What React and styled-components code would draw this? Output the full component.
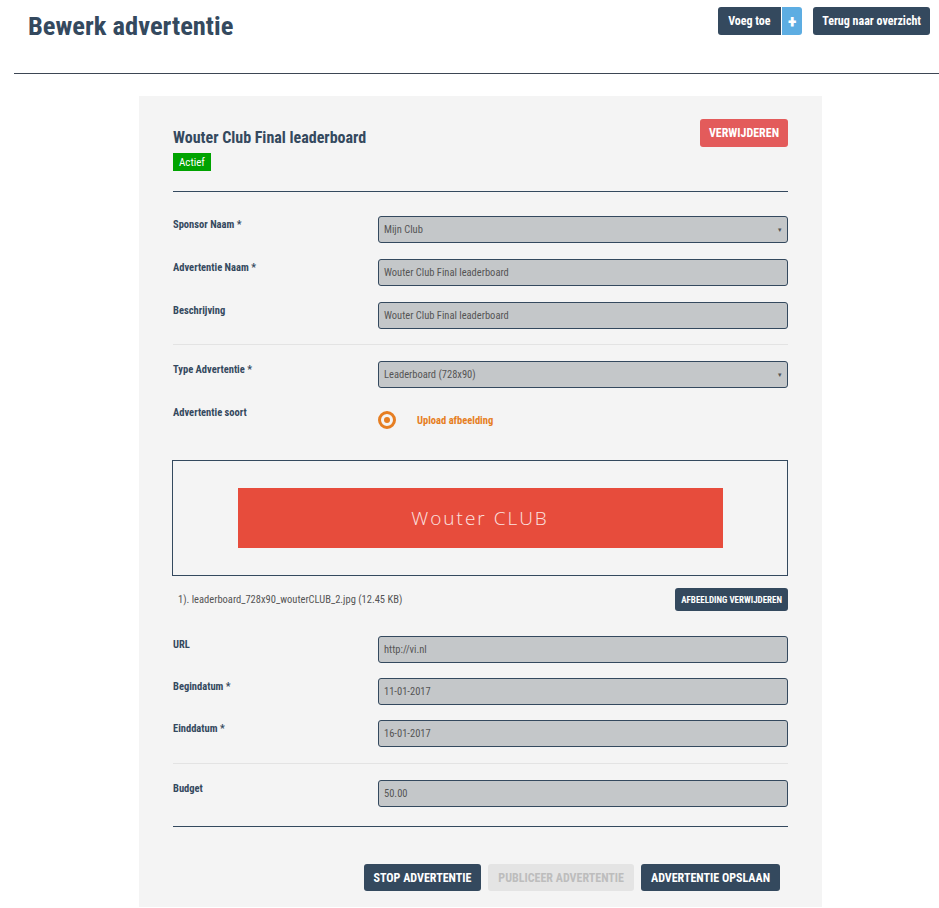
import styled, { createGlobalStyle } from "styled-components";

const GlobalStyle = createGlobalStyle`
  body {
    margin: 0;
    background: #fff;
    font-family: "Roboto Condensed", "Liberation Sans Narrow", Roboto, sans-serif;
    color: #34495e;
  }
`;

const fields1 = [
  { label: "Sponsor Naam *", value: "Mijn Club", select: true },
  { label: "Advertentie Naam *", value: "Wouter Club Final leaderboard" },
  { label: "Beschrijving", value: "Wouter Club Final leaderboard" },
];

const fields2 = [
  { label: "URL", value: "http://vi.nl" },
  { label: "Begindatum *", value: "11-01-2017" },
  { label: "Einddatum *", value: "16-01-2017" },
];

const Field = ({ label, value, select }) => (
  <Row>
    <Label>{label}</Label>
    <Input>
      <span>{value}</span>
      {select && <Caret>▾</Caret>}
    </Input>
  </Row>
);

const App = () => {
  return (
    <>
      <GlobalStyle />
      <Header>
        <Title>Bewerk advertentie</Title>
        <HeaderActions>
          <SplitButton>
            <span>Voeg toe</span>
            <Plus>+</Plus>
          </SplitButton>
          <DarkButton>Terug naar overzicht</DarkButton>
        </HeaderActions>
      </Header>
      <Panel>
        <PanelHead>
          <div>
            <AdTitle>Wouter Club Final leaderboard</AdTitle>
            <Badge>Actief</Badge>
          </div>
          <DeleteButton>VERWIJDEREN</DeleteButton>
        </PanelHead>
        <Rule />
        <Group $top={24} $bottom={15} $gap={16}>
          {fields1.map((f) => (
            <Field key={f.label} {...f} />
          ))}
        </Group>
        <Rule light />
        <Group $top={16} $bottom={16} $gap={16}>
          <Field label="Type Advertentie *" value="Leaderboard (728x90)" select />
          <Row>
            <Label>Advertentie soort</Label>
            <RadioWrap>
              <Radio />
              <RadioText>Upload afbeelding</RadioText>
            </RadioWrap>
          </Row>
        </Group>
        <Preview>
          <Banner>Wouter CLUB</Banner>
        </Preview>
        <FileRow>
          <FileName>1). leaderboard_728x90_wouterCLUB_2.jpg (12.45 KB)</FileName>
          <SmallButton>AFBEELDING VERWIJDEREN</SmallButton>
        </FileRow>
        <Group $top={0} $bottom={16} $gap={15}>
          {fields2.map((f) => (
            <Field key={f.label} {...f} />
          ))}
        </Group>
        <Rule light />
        <Group $top={16} $bottom={19} $gap={16}>
          <Field label="Budget" value="50.00" />
        </Group>
        <Rule />
        <Footer>
          <DarkButton big>STOP ADVERTENTIE</DarkButton>
          <DarkButton big disabled>PUBLICEER ADVERTENTIE</DarkButton>
          <DarkButton big>ADVERTENTIE OPSLAAN</DarkButton>
        </Footer>
      </Panel>
    </>
  );
};

export default App;

const Header = styled.div`
  display: flex;
  justify-content: space-between;
  align-items: flex-start;
  margin-left: 14px;
  padding: 7px 9px 0 14px;
  height: 66px;
  border-bottom: 1px solid #3d4654;
`;

const Title = styled.h1`
  margin: 3px 0 0;
  font-size: 26.5px;
  font-weight: 700;
  color: #34495e;
`;

const HeaderActions = styled.div`
  display: flex;
  gap: 11px;
`;

const SplitButton = styled.div`
  display: flex;
  height: 28px;
  border-radius: 3px;
  overflow: hidden;
  color: #fff;
  font-size: 12px;
  font-weight: 700;
  span {
    display: flex;
    align-items: center;
    padding: 0 10px;
    background: #34495e;
    width: 43px;
  }
`;

const Plus = styled.b`
  display: flex;
  align-items: center;
  justify-content: center;
  width: 20px;
  margin-left: 1px;
  background: #5dade2;
  font-size: 18px;
`;

const DarkButton = styled.button`
  height: ${(p) => (p.big ? "27px" : "28px")};
  padding: 0 ${(p) => (p.big ? "10px" : "9px")};
  border: none;
  border-radius: 3px;
  background: ${(p) => (p.disabled ? "#e4e4e4" : "#34495e")};
  color: ${(p) => (p.disabled ? "#bdbdbd" : "#fff")};
  font-family: inherit;
  font-size: 12px;
  font-weight: 700;
`;

const Panel = styled.div`
  width: 615px;
  margin: 22px 0 0 139px;
  padding: 23px 34px 16px;
  background: #f4f4f4;
`;

const PanelHead = styled.div`
  display: flex;
  justify-content: space-between;
  align-items: flex-start;
  padding-bottom: 20px;
`;

const AdTitle = styled.h2`
  margin: 9px 0 4px;
  font-size: 16px;
  font-weight: 700;
  color: #34495e;
`;

const Badge = styled.span`
  display: inline-block;
  padding: 3px 6px 2px;
  background: #00a300;
  color: #fff;
  font-size: 11px;
`;

const DeleteButton = styled.button`
  height: 28px;
  padding: 0 9px;
  border: none;
  border-radius: 3px;
  background: #e35b5b;
  color: #fff;
  font-family: inherit;
  font-size: 12px;
  font-weight: 700;
`;

const Rule = styled.hr`
  margin: 0;
  border: none;
  border-top: 1px solid ${(p) => (p.light ? "#e3e3e3" : "#34495e")};
`;

const Group = styled.div`
  display: flex;
  flex-direction: column;
  gap: ${(p) => p.$gap}px;
  padding: ${(p) => `${p.$top}px 0 ${p.$bottom}px`};
`;

const Row = styled.div`
  display: grid;
  grid-template-columns: 205px 1fr;
  align-items: start;
`;

const Label = styled.div`
  padding-top: 2px;
  font-size: 10.5px;
  font-weight: 700;
  color: #34495e;
`;

const Input = styled.div`
  display: flex;
  align-items: center;
  justify-content: space-between;
  height: 25px;
  padding: 0 5px;
  border: 1px solid #34495e;
  border-radius: 3px;
  background: #c4c7c9;
  color: #555;
  font-size: 10.5px;
`;

const Caret = styled.span`
  font-size: 7px;
  color: #555;
`;

const RadioWrap = styled.div`
  display: flex;
  align-items: center;
  gap: 21px;
  padding-top: 7px;
`;

const Radio = styled.span`
  box-sizing: border-box;
  width: 18px;
  height: 18px;
  border-radius: 50%;
  border: 3px solid #e67e22;
  display: flex;
  align-items: center;
  justify-content: center;
  &::after {
    content: "";
    width: 6px;
    height: 6px;
    border-radius: 50%;
    background: #e67e22;
  }
`;

const RadioText = styled.span`
  color: #e67e22;
  font-size: 10.5px;
  font-weight: 700;
`;

const Preview = styled.div`
  display: flex;
  justify-content: center;
  align-items: center;
  height: 114px;
  margin: 15px 0 0 -1px;
  border: 1px solid #34495e;
`;

const Banner = styled.div`
  display: flex;
  align-items: center;
  justify-content: center;
  width: 485px;
  height: 60px;
  background: #e74c3c;
  color: #fbe3e0;
  font-family: "Open Sans", sans-serif;
  font-weight: 300;
  font-size: 19px;
  letter-spacing: 2px;
`;

const FileRow = styled.div`
  display: flex;
  justify-content: space-between;
  align-items: center;
  padding: 12px 0 25px 5px;
`;

const FileName = styled.span`
  font-size: 10.5px;
  color: #555;
`;

const SmallButton = styled.button`
  height: 23px;
  padding: 0 6px;
  border: none;
  border-radius: 3px;
  background: #34495e;
  color: #fff;
  font-family: inherit;
  font-size: 9px;
  font-weight: 700;
`;

const Footer = styled.div`
  display: flex;
  justify-content: flex-end;
  gap: 7px;
  padding: 37px 8px 0 0;
`;
